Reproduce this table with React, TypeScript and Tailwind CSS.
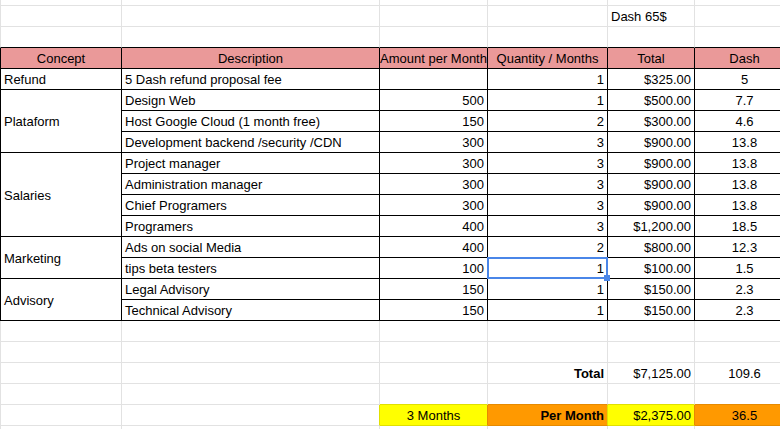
import clsx from "clsx";
import type { ReactNode } from "react";

type Align = "left" | "center" | "right";
type Line = "grid" | "ink";

type Item = {
  description: string;
  amount?: string;
  quantity: string;
  total: string;
  dash: string;
  selected?: boolean;
};

type Group = { concept: string; items: Item[] };

const COL_WIDTHS = [
  "w-[122px]",
  "w-[258px]",
  "w-[108px]",
  "w-[120px]",
  "w-[87px]",
  "w-[100px]",
];

const ALIGN: Record<Align, string> = {
  left: "justify-start pl-[3px]",
  center: "justify-center",
  right: "justify-end pr-[3px]",
};

const RIGHT_LINE: Record<Line, string> = {
  grid: "border-r-[#e2e2e2]",
  ink: "border-r-black",
};
const BOTTOM_LINE: Record<Line, string> = {
  grid: "border-b-[#e2e2e2]",
  ink: "border-b-black",
};
const LEFT_LINE: Record<Line, string> = {
  grid: "border-l-[#e2e2e2]",
  ink: "border-l-black",
};

const GROUPS: Group[] = [
  {
    concept: "Refund",
    items: [
      { description: "5 Dash refund proposal fee", quantity: "1", total: "$325.00", dash: "5" },
    ],
  },
  {
    concept: "Plataform",
    items: [
      { description: "Design Web", amount: "500", quantity: "1", total: "$500.00", dash: "7.7" },
      { description: "Host Google Cloud (1 month free)", amount: "150", quantity: "2", total: "$300.00", dash: "4.6" },
      { description: "Development backend /security /CDN", amount: "300", quantity: "3", total: "$900.00", dash: "13.8" },
    ],
  },
  {
    concept: "Salaries",
    items: [
      { description: "Project manager", amount: "300", quantity: "3", total: "$900.00", dash: "13.8" },
      { description: "Administration manager", amount: "300", quantity: "3", total: "$900.00", dash: "13.8" },
      { description: "Chief Programers", amount: "300", quantity: "3", total: "$900.00", dash: "13.8" },
      { description: "Programers", amount: "400", quantity: "3", total: "$1,200.00", dash: "18.5" },
    ],
  },
  {
    concept: "Marketing",
    items: [
      { description: "Ads on social Media", amount: "400", quantity: "2", total: "$800.00", dash: "12.3" },
      { description: "tips beta testers", amount: "100", quantity: "1", total: "$100.00", dash: "1.5", selected: true },
    ],
  },
  {
    concept: "Advisory",
    items: [
      { description: "Legal Advisory", amount: "150", quantity: "1", total: "$150.00", dash: "2.3" },
      { description: "Technical Advisory", amount: "150", quantity: "1", total: "$150.00", dash: "2.3" },
    ],
  },
];

function Cell({
  col,
  children,
  align = "left",
  bold,
  line = "grid",
  right,
  bottom,
  fill,
  clip = true,
  className,
}: {
  col: number;
  children?: ReactNode;
  align?: Align;
  bold?: boolean;
  line?: Line;
  right?: string;
  bottom?: string;
  fill?: string;
  clip?: boolean;
  className?: string;
}) {
  return (
    <div
      className={clsx(
        "flex shrink-0 items-center whitespace-nowrap border-r border-b pt-px leading-[19px]",
        clip && "overflow-hidden",
        COL_WIDTHS[col],
        col === 0 && "border-l",
        col === 0 && LEFT_LINE[line],
        right ?? RIGHT_LINE[line],
        bottom ?? BOTTOM_LINE[line],
        ALIGN[align],
        bold && "font-bold",
        fill,
        className,
      )}
    >
      {children}
    </div>
  );
}

function Row({ children, height = "h-[21px]" }: { children: ReactNode; height?: string }) {
  return <div className={clsx("flex shrink-0", height)}>{children}</div>;
}

function BlankRow({ height, bottom }: { height?: string; bottom?: string }) {
  return (
    <Row height={height}>
      {COL_WIDTHS.map((_, i) => (
        <Cell key={i} col={i} bottom={bottom} />
      ))}
    </Row>
  );
}

// active cell outline + fill handle, drawn over the grid lines
function Selection() {
  return (
    <>
      <span className="pointer-events-none absolute -left-px -top-px z-10 h-[22px] w-[121px] border-2 border-[#4a86e8]" />
      <span className="pointer-events-none absolute left-[116px] top-[17px] z-10 h-[6px] w-[6px] bg-[#4a86e8]" />
    </>
  );
}

function ItemRow({ item }: { item: Item }) {
  return (
    <Row>
      <Cell col={1} line="ink">{item.description}</Cell>
      <Cell col={2} line="ink" align="right">{item.amount}</Cell>
      <Cell
        col={3}
        line="ink"
        align="right"
        clip={!item.selected}
        className={item.selected ? "relative" : undefined}
      >
        {item.quantity}
        {item.selected && <Selection />}
      </Cell>
      <Cell col={4} line="ink" align="right">{item.total}</Cell>
      <Cell col={5} line="ink" align="center">{item.dash}</Cell>
    </Row>
  );
}

function GroupRows({ group }: { group: Group }) {
  return (
    <div className="flex">
      <Cell col={0} line="ink">{group.concept}</Cell>
      <div className="flex flex-col">
        {group.items.map((item) => (
          <ItemRow key={item.description} item={item} />
        ))}
      </div>
    </div>
  );
}

const HEADERS = ["Concept", "Description", "Amount per Month", "Quantity / Months", "Total", "Dash"];

export default function App() {
  return (
    <div className="flex h-[429px] w-[780px] flex-col overflow-hidden bg-white font-['Liberation_Sans',Arial,sans-serif] text-[13px] text-black">
      <BlankRow height="h-[6px]" />
      <Row>
        <Cell col={0} />
        <Cell col={1} />
        <Cell col={2} />
        <Cell col={3} />
        <Cell col={4}>Dash 65$</Cell>
        <Cell col={5} />
      </Row>
      <BlankRow bottom="border-b-black" />

      <Row>
        {HEADERS.map((label, i) => (
          <Cell key={label} col={i} line="ink" align="center" fill="bg-[#ea9999]">
            {label}
          </Cell>
        ))}
      </Row>

      {GROUPS.map((group) => (
        <GroupRows key={group.concept} group={group} />
      ))}

      <BlankRow />
      <BlankRow />
      <Row>
        <Cell col={0} />
        <Cell col={1} />
        <Cell col={2} />
        <Cell col={3} align="right" bold>Total</Cell>
        <Cell col={4} align="right">$7,125.00</Cell>
        <Cell col={5} align="center">109.6</Cell>
      </Row>
      <Row>
        <Cell col={0} />
        <Cell col={1} />
        <Cell col={2} bottom="border-b-[#e0e000]" />
        <Cell col={3} bottom="border-b-[#e68a00]" />
        <Cell col={4} bottom="border-b-[#e0e000]" />
        <Cell col={5} bottom="border-b-[#e68a00]" />
      </Row>
      <Row>
        <Cell col={0} />
        <Cell col={1} right="border-r-[#e0e000]" />
        <Cell col={2} align="center" fill="bg-[#ffff00]" right="border-r-[#e68a00]" bottom="border-b-[#e0e000]">
          3 Months
        </Cell>
        <Cell col={3} align="right" bold fill="bg-[#ff9900]" right="border-r-[#e0e000]" bottom="border-b-[#e68a00]">
          Per Month
        </Cell>
        <Cell col={4} align="right" fill="bg-[#ffff00]" right="border-r-[#e68a00]" bottom="border-b-[#e0e000]">
          $2,375.00
        </Cell>
        <Cell col={5} align="center" fill="bg-[#ff9900]" bottom="border-b-[#e68a00]">
          36.5
        </Cell>
      </Row>
      <BlankRow />
    </div>
  );
}
